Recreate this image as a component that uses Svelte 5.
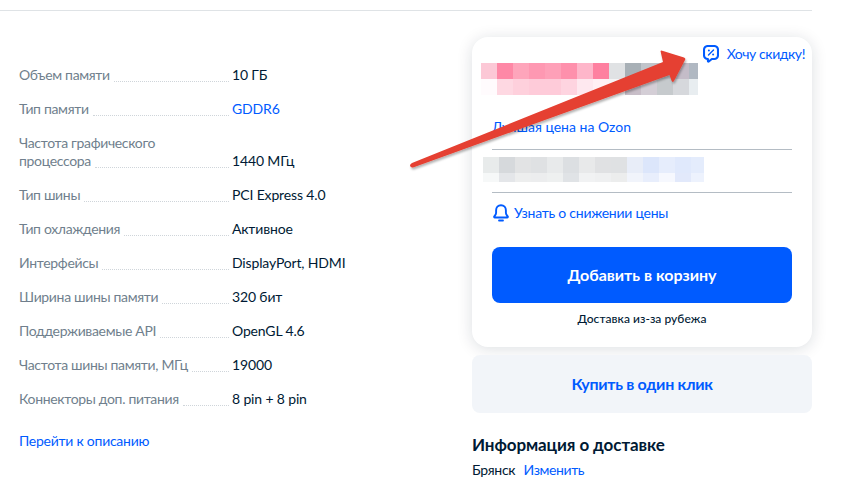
<script>
  const specs = [
    { k: ['Объем памяти'], v: '10 ГБ' },
    { k: ['Тип памяти'], v: 'GDDR6', link: true },
    { k: ['Частота графического', 'процессора'], v: '1440 МГц' },
    { k: ['Тип шины'], v: 'PCI Express 4.0' },
    { k: ['Тип охлаждения'], v: 'Активное' },
    { k: ['Интерфейсы'], v: 'DisplayPort, HDMI' },
    { k: ['Ширина шины памяти'], v: '320 бит' },
    { k: ['Поддерживаемые API'], v: 'OpenGL 4.6' },
    { k: ['Частота шины памяти, МГц'], v: '19000' },
    { k: ['Коннекторы доп. питания'], v: '8 pin + 8 pin' }
  ];
  const blurA = ['#fcc8d6','#fe88a6','#fea5bb','#fe98b2','#fea0b8','#fe90ac','#feb6ca','#fe80a0','#e0e2e4','#a8b0b6','#c0c4ca','#bdc2c8','#c4bcc8','#b0b8c2',
    '#fffbfd','#fed8e2','#fed0dc','#fecbd9','#fecbd9','#fed4e0','#fee8ef','#fff0f4','#f5f5f6','#c8bec8','#d4ced6','#c6cacd','#d6d8dc','#e8edf0'];
  const blurB = ['#e8ebeb','#d6d9dc','#e2e3e4','#dfe1e3','#e8eaeb','#dcdfe2','#e8e9ea','#e0e1e3','#dfe1e3','#e8edf8','#dce6fb','#e6edfc','#e0e9fc','#e4ecfc',
    '#f6f8f8','#e4e6e9','#edeeee','#ecedee','#eef0f0','#e0e3e6','#f1f2f3','#eff0f1','#eceded','#f1f4fb','#e8eefc','#f6f8fe','#e2e9fb','#edf2fd'];
</script>

<div class="page">
  <div class="rule"></div>
  <div class="columns">
    <section class="specs">
      {#each specs as s}
        <div class="row">
          <div class="key">
            {#each s.k.slice(0, -1) as line}<div>{line}</div>{/each}
            <div class="last"><span>{s.k[s.k.length - 1]}</span><i class="dots"></i></div>
          </div>
          <div class="val" class:link={s.link}>{s.v}</div>
        </div>
      {/each}
      <a class="more" href="#top">Перейти к описанию</a>
    </section>

    <aside class="side">
      <div class="card">
        <div class="discount">
          <svg width="16" height="18" viewBox="0 0 16 18" fill="none">
            <path d="M4.800 1h6.400A3.800 3.800 0 0 1 15 4.800v5.400a3.800 3.800 0 0 1-3.800 3.800H8.800l-3 2.500c-.4.300-.9.100-.9-.4V14A3.800 3.800 0 0 1 1 10.200V4.800A3.800 3.800 0 0 1 4.800 1z" stroke="#005bff" stroke-width="2.100" stroke-linejoin="round"/>
            <path d="M5.500 10l5-5" stroke="#005bff" stroke-width="1.400" stroke-linecap="round"/>
            <circle cx="5.900" cy="5.600" r="1" fill="#005bff"/>
            <circle cx="10.100" cy="9.400" r="1" fill="#005bff"/>
          </svg>
          <span>Хочу скидку!</span>
        </div>
        <div class="mosaic a">
          {#each blurA as c}<b style="background:{c}"></b>{/each}
        </div>
        <a class="best" href="#top">Лучшая цена на Ozon</a>
        <div class="divider"></div>
        <div class="mosaic b">
          {#each blurB as c}<b style="background:{c}"></b>{/each}
        </div>
        <div class="divider second"></div>
        <div class="notify">
          <svg width="16" height="18" viewBox="0 0 16 18" fill="none">
            <path d="M8 1.200c-3 0-4.900 2.200-4.900 5v2.600c0 1-.4 2-1.100 2.700l-.7.8c-.4.500-.1 1.200.5 1.200h12.400c.6 0 .9-.7.5-1.200l-.7-.8c-.7-.7-1.100-1.700-1.100-2.700V6.200c0-2.800-1.900-5-4.900-5z" stroke="#005bff" stroke-width="1.900" stroke-linejoin="round"/>
            <path d="M6 16.500h4" stroke="#005bff" stroke-width="1.800" stroke-linecap="round"/>
          </svg>
          <span>Узнать о снижении цены</span>
        </div>
        <button class="add">Добавить в корзину</button>
        <div class="abroad">Доставка из-за рубежа</div>
      </div>
      <button class="oneclick">Купить в один клик</button>
      <h3>Информация о доставке</h3>
      <div class="city">Брянск <a href="#top">Изменить</a></div>
    </aside>
  </div>

  <svg class="arrow" width="290" height="130" viewBox="405 45 290 130">
    <defs>
      <filter id="sh" x="-5%" y="-5%" width="110%" height="115%">
        <feDropShadow dx="1" dy="2" stdDeviation="1.200" flood-color="#000" flood-opacity=".3"/>
      </filter>
    </defs>
    <path d="M660.500 51 Q661 50 663 51 L684 57.500 Q686 58.500 685 60 L674 81 Q672.500 83 671.500 80.500 L669.500 75 L413 167.500 Q410.500 168 410 165.500 Q410 164 412 163 L663 62 Z" fill="#e53f30" filter="url(#sh)"/>
  </svg>
</div>

<style>
  :global(body) {
    margin: 0;
    background: #fff;
    overflow: hidden;
  }
  .page {
    position: relative;
    width: 866px;
    height: 477px;
    overflow: hidden;
    font-family: Lato, "Noto Sans", sans-serif;
    font-size: 14px;
    line-height: 18px;
    letter-spacing: -0.25px;
    color: #001a34;
  }
  a {
    color: #005bff;
    text-decoration: none;
  }
  .rule {
    width: 812px;
    height: 1px;
    margin-top: 10px;
    background: #dfe3e6;
  }
  .columns {
    display: grid;
    grid-template-columns: 453px 340px;
    padding: 26px 0 0 19px;
  }
  .specs {
    display: flex;
    flex-direction: column;
    gap: 16px;
    padding-top: 29px;
  }
  .row {
    display: grid;
    grid-template-columns: 210px 1fr;
    column-gap: 3px;
    align-items: end;
  }
  .key {
    color: #707f8d;
    letter-spacing: -0.33px;
  }
  .last {
    display: flex;
  }
  .dots {
    flex: 1;
    margin: 0 0 2px 4px;
    border-bottom: 1px dotted #cfd5da;
  }
  .val {
    letter-spacing: -0.15px;
  }
  .val.link {
    color: #005bff;
  }
  .more {
    margin-top: 8px;
  }
  .card {
    display: flex;
    flex-direction: column;
    height: 310px;
    box-sizing: border-box;
    padding: 7px 20px 0;
    border-radius: 16px;
    background: #fff;
    box-shadow: 0 2px 16px rgba(0, 26, 52, 0.14);
  }
  .discount {
    display: flex;
    justify-content: flex-end;
    align-items: center;
    gap: 8px;
    height: 19px;
    margin-right: -13px;
    color: #005bff;
    letter-spacing: -0.42px;
  }
  .discount svg {
    margin-top: 1px;
  }
  .mosaic {
    display: grid;
    grid-template-columns: repeat(14, 16px);
    overflow: hidden;
  }
  .mosaic.a {
    width: 217px;
    height: 32px;
    margin-left: -11px;
    grid-auto-rows: 16px;
  }
  .mosaic.b {
    width: 221px;
    height: 25px;
    margin: 7px 0 0 -9px;
    grid-template-rows: 16px 9px;
  }
  .best {
    margin-top: 23px;
    letter-spacing: 0;
  }
  .divider {
    height: 1px;
    margin-top: 13px;
    background: #b4bcc4;
  }
  .divider.second {
    margin-top: 10px;
  }
  .notify {
    display: flex;
    align-items: center;
    gap: 5px;
    margin: 10px 0 0 1px;
    height: 20px;
    color: #005bff;
  }
  .add {
    height: 56px;
    margin-top: 24px;
    padding: 0 0 2px;
    border: 0;
    border-radius: 8px;
    background: #005bff;
    color: #fff;
    font: 700 16px Lato, "Noto Sans", sans-serif;
  }
  .abroad {
    margin-top: 7px;
    text-align: center;
    font-size: 12px;
    font-weight: 500;
    letter-spacing: 0.05px;
  }
  .oneclick {
    display: block;
    width: 340px;
    height: 58px;
    margin-top: 8px;
    padding: 0 0 2px;
    border: 0;
    border-radius: 8px;
    background: #f2f5f9;
    color: #005bff;
    font: 700 16px Lato, "Noto Sans", sans-serif;
    letter-spacing: -0.3px;
  }
  h3 {
    margin: 22px 0 0;
    font-size: 17px;
    line-height: 20px;
    font-weight: 700;
    letter-spacing: -0.1px;
  }
  .city {
    margin-top: 6px;
    letter-spacing: -0.3px;
  }
  .city a {
    margin-left: 5px;
    letter-spacing: -0.4px;
  }
  .arrow {
    position: absolute;
    left: 405px;
    top: 45px;
    pointer-events: none;
    overflow: visible;
  }
</style>
